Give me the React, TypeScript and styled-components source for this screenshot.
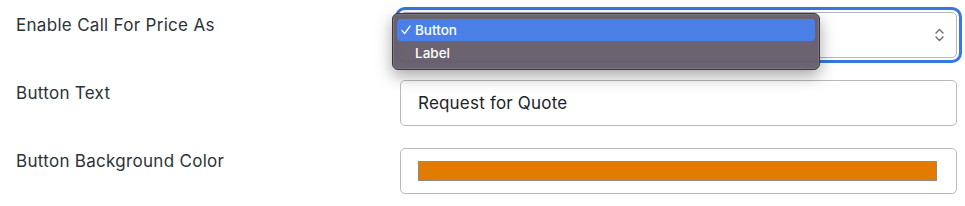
import React from "react";
import styled, { createGlobalStyle } from "styled-components";

const Global = createGlobalStyle`
  html, body { margin: 0; padding: 0; background: #ffffff; }
  body { font-family: Inter, "Noto Sans", "Liberation Sans", sans-serif; -webkit-font-smoothing: antialiased; }
`;

const Form = styled.div`
  display: grid;
  grid-template-columns: 384px 557px;
  column-gap: 0;
  row-gap: 22px;
  padding: 12px 8px 0 16px;
`;

const Label = styled.div`
  font-size: 17px;
  line-height: 22px;
  color: #2c3338;
  padding-top: 2px;
  letter-spacing: 0.3px;
`;

const FieldBox = styled.div<{ $focused?: boolean }>`
  position: relative;
  box-sizing: border-box;
  height: 46px;
  border: 1px solid ${(p) => (p.$focused ? "#b4b7bb" : "#b7babe")};
  border-radius: 5px;
  background: #fff;
  display: flex;
  align-items: center;
  padding: 0 17px;
  box-shadow: ${(p) =>
    p.$focused ? "0 0 0 2px #ffffff, 0 0 0 5px #3578e0" : "none"};
`;

const InputText = styled.span`
  font-size: 17px;
  color: #1d2327;
  letter-spacing: 0.2px;
`;

const Swatch = styled.div<{ $color: string }>`
  flex: 1;
  height: 20px;
  margin-right: 2px;
  box-sizing: border-box;
  background: ${(p) => p.$color};
  border: 1px solid #8e8a86;
`;

const Chevrons = styled.svg`
  margin-left: auto;
  margin-right: -6px;
`;

const Menu = styled.div`
  position: absolute;
  left: -9px;
  top: 0px;
  width: 428px;
  box-sizing: border-box;
  padding: 5px 4px;
  border-radius: 6px;
  background: rgba(104, 96, 108, 0.98);
  border: 1px solid #3a363c;
  box-shadow: inset 0 0 0 1px rgba(255, 255, 255, 0.12), 0 6px 16px rgba(0, 0, 0, 0.35);
  z-index: 5;
`;

const MenuItem = styled.div<{ $active?: boolean }>`
  display: flex;
  align-items: center;
  height: 22px;
  border-radius: 4px;
  padding-left: 4px;
  background: ${(p) => (p.$active ? "#4a7fe8" : "transparent")};
  color: #ffffff;
  font-size: 13.5px;
  font-weight: 500;
  & + & { margin-top: 1px; }
`;

const Check = styled.svg`
  width: 10px;
  height: 10px;
  margin-right: 4px;
  flex: none;
`;

const CheckSpacer = styled.span`
  width: 14px;
  flex: none;
`;

export default function App() {
  return (
    <>
      <Global />
      <Form>
        <Label>Enable Call For Price As</Label>
        <FieldBox $focused>
          <Chevrons width="11" height="16" viewBox="0 0 11 16" fill="none">
            <path d="M2 6 L5.5 2.5 L9 6" stroke="#6b6f74" strokeWidth="1.4" strokeLinecap="round" strokeLinejoin="round" />
            <path d="M2 10 L5.5 13.5 L9 10" stroke="#6b6f74" strokeWidth="1.4" strokeLinecap="round" strokeLinejoin="round" />
          </Chevrons>
          <Menu>
            <MenuItem $active>
              <Check viewBox="0 0 10 10" fill="none">
                <path d="M1 5.6 L3.7 8.6 L9 1.2" stroke="#ffffff" strokeWidth="1.4" strokeLinecap="round" strokeLinejoin="round" />
              </Check>
              Button
            </MenuItem>
            <MenuItem>
              <CheckSpacer />
              Label
            </MenuItem>
          </Menu>
        </FieldBox>

        <Label>Button Text</Label>
        <FieldBox>
          <InputText>Request for Quote</InputText>
        </FieldBox>

        <Label>Button Background Color</Label>
        <FieldBox>
          <Swatch $color="#e27b00" />
        </FieldBox>
      </Form>
    </>
  );
}
